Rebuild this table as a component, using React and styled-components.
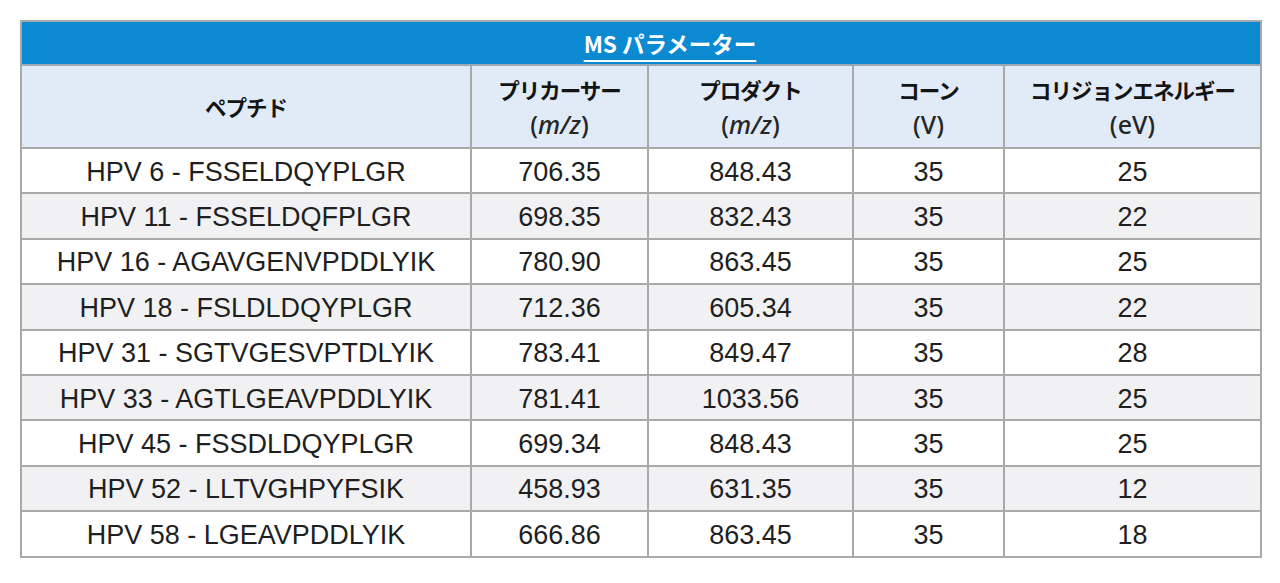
import React from "react";
import styled, { createGlobalStyle } from "styled-components";

const Global = createGlobalStyle`
  html, body { margin: 0; padding: 0; background: #ffffff; }
`;

const Page = styled.div`
  padding: 20px 20px 0 20px;
  width: 1280px;
  box-sizing: border-box;
`;

const Table = styled.table`
  width: 1240px;
  border-collapse: collapse;
  table-layout: fixed;
  border: 2px solid #a9a9a9;
`;

const TitleCell = styled.th`
  background: #0b89d1;
  height: 42px;
  padding: 0 0 0 58px;
  text-align: center;
  border: 2px solid #a9a9a9;
  border-bottom: 2px solid #9aa8b5;
`;

const TitleText = styled.span`
  color: #ffffff;
  font-family: "Noto Sans CJK JP", "Noto Sans", sans-serif;
  font-weight: 700;
  font-size: 22.5px;
  text-decoration: underline;
  text-decoration-thickness: 2px;
  text-underline-offset: 7px;
`;

const HeadCell = styled.th`
  background: #e0ebf7;
  height: 81px;
  padding: 0;
  text-align: center;
  vertical-align: middle;
  border: 2px solid #a9a9a9;
  color: #141414;
`;

const HeadLabel = styled.div`
  font-family: "Noto Sans CJK JP", sans-serif;
  font-weight: 700;
  font-size: 21.5px;
  letter-spacing: -1px;
  line-height: 34px;
`;

const HeadUnit = styled.div`
  font-family: "Noto Sans", "Open Sans", sans-serif;
  font-weight: 500;
  font-size: 25px;
  line-height: 34px;
  color: #262626;
  em { font-style: italic; }
`;

const Row = styled.tr`
  background: ${(p) => (p.$alt ? "#f1f1f3" : "#ffffff")};
`;

const Cell = styled.td`
  height: 40.4px;
  padding: 3px 0 0 0;
  text-align: center;
  vertical-align: middle;
  border: 2px solid #a9a9a9;
  font-family: "Liberation Sans", Arial, sans-serif;
  font-size: 27px;
  color: #1f1f1f;
`;

const columns = [
  { w: 450, label: "ペプチド" },
  { w: 177, label: "プリカーサー", unit: "mz" },
  { w: 205, label: "プロダクト", unit: "mz" },
  { w: 151, label: "コーン", unit: "(V)" },
  { w: 257, label: "コリジョンエネルギー", unit: "(eV)" },
];

const data = [
  ["HPV 6 - FSSELDQYPLGR", "706.35", "848.43", "35", "25"],
  ["HPV 11 - FSSELDQFPLGR", "698.35", "832.43", "35", "22"],
  ["HPV 16 - AGAVGENVPDDLYIK", "780.90", "863.45", "35", "25"],
  ["HPV 18 - FSLDLDQYPLGR", "712.36", "605.34", "35", "22"],
  ["HPV 31 - SGTVGESVPTDLYIK", "783.41", "849.47", "35", "28"],
  ["HPV 33 - AGTLGEAVPDDLYIK", "781.41", "1033.56", "35", "25"],
  ["HPV 45 - FSSDLDQYPLGR", "699.34", "848.43", "35", "25"],
  ["HPV 52 - LLTVGHPYFSIK", "458.93", "631.35", "35", "12"],
  ["HPV 58 - LGEAVPDDLYIK", "666.86", "863.45", "35", "18"],
];

export default function App() {
  return (
    <Page>
      <Global />
      <Table>
        <colgroup>
          {columns.map((c, i) => (
            <col key={i} style={{ width: c.w }} />
          ))}
        </colgroup>
        <thead>
          <tr>
            <TitleCell colSpan={5}>
              <TitleText>MS パラメーター</TitleText>
            </TitleCell>
          </tr>
          <tr>
            {columns.map((c, i) => (
              <HeadCell key={i}>
                <HeadLabel>{c.label}</HeadLabel>
                {c.unit === "mz" ? (
                  <HeadUnit>
                    (<em>m/z</em>)
                  </HeadUnit>
                ) : c.unit ? (
                  <HeadUnit>{c.unit}</HeadUnit>
                ) : null}
              </HeadCell>
            ))}
          </tr>
        </thead>
        <tbody>
          {data.map((r, i) => (
            <Row key={i} $alt={i % 2 === 1}>
              {r.map((v, j) => (
                <Cell key={j}>{v}</Cell>
              ))}
            </Row>
          ))}
        </tbody>
      </Table>
    </Page>
  );
}
